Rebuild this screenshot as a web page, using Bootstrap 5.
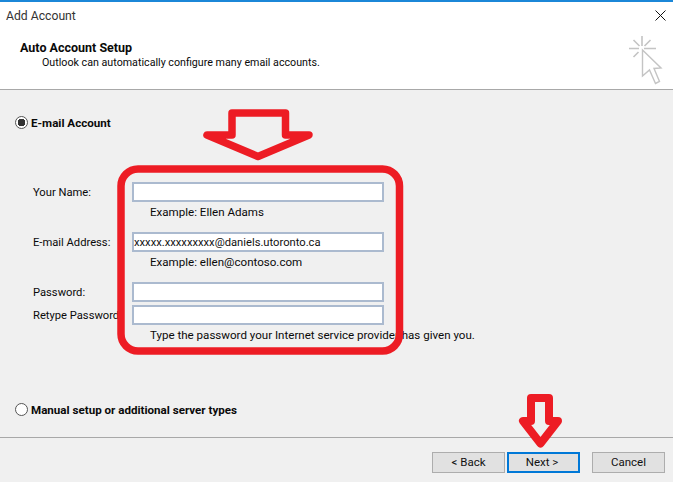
<!doctype html>
<html lang="en">
<head>
<meta charset="utf-8">
<title>Add Account</title>
<link rel="stylesheet" href="https://cdn.jsdelivr.net/npm/bootstrap@5.3.0/dist/css/bootstrap.min.css">
<style>
html,body{margin:0;height:482px;overflow:hidden}
body{font-family:"Roboto",sans-serif;font-size:11.2px;line-height:15px;color:#0a0a0a;background:#f0f0f0}
.dlg{position:relative;width:673px;height:482px;border-top:2px solid #1b87d8}
.head-pane{height:88px;background:#fff;border-bottom:1px solid #a8a8a8;position:relative}
.win-title{padding:6px 0 0 6px;font-size:12.2px;line-height:16px;color:#333}
.setup-title{padding:16px 0 0 20px;font-weight:700;font-size:12.5px;line-height:15px}
.setup-sub{padding:0 0 0 42px;font-size:10.7px;line-height:15px}
.close-x{position:absolute;left:655px;top:8px}
.cursor-art{position:absolute;left:625px;top:32px}
.main-pane{height:347px;padding:25px 0 0 15px;position:relative}
.radio-line{display:flex;align-items:flex-start;gap:3px;margin:0;padding:0;min-height:0;font-weight:700;font-size:11.6px;line-height:15px}
.radio-line label{padding-top:1px}
.radio-line .form-check-input{float:none;width:13px;height:13px;margin:1px 0 0;background-color:#fff;border:1px solid #555;flex:none}
.radio-line .form-check-input:checked{background-color:#fff;border-color:#555;background-image:radial-gradient(circle,#333 0 3.6px,transparent 4px)}
.fields{margin:51px 0 0 18px;width:351px;display:grid;grid-template-columns:99px 252px;align-items:center}
.fields label{margin:0;white-space:nowrap;line-height:15px}
.fields .form-control{height:20px;padding:0;border:2px solid #abbacf;border-radius:0;background:#fff;font:inherit;color:#111;box-shadow:none;min-height:0}
.hint{grid-column:2;padding-left:18px;white-space:nowrap;font-size:11.57px;line-height:15px}
.hint-a{height:30px;padding-top:3px}.hint-b{height:30px;padding-top:3px}.hint-c{height:20px;padding-top:3px}
.gap-row{height:3px;grid-column:1/3}
.manual-row{position:absolute;left:15px;top:312px}
.foot-pane{height:45px;border-top:1px solid #a8a8a8;padding:14px 8px 0 0;display:flex;justify-content:flex-end}
.foot-pane .btn{width:73px;height:21px;padding:0;border-radius:0;background:#e1e1e1;border:1px solid #adadad;color:#111;font-size:11.5px;line-height:17px;box-shadow:none}
.foot-pane .btn.primary-act{border:2px solid #0078d7;margin:0 12px 0 2px;padding-right:3px;line-height:15px}
.ink{position:absolute;left:0;top:-2px;pointer-events:none}
</style>
</head>
<body>
<div class="dlg">
  <div class="head-pane">
    <div class="win-title">Add Account</div>
    <svg class="close-x" width="11" height="11" viewBox="0 0 11 11"><path d="M.5.5l10 10M10.5.5l-10 10" stroke="#111" stroke-width="1" fill="none"/></svg>
    <div class="setup-title">Auto Account Setup</div>
    <div class="setup-sub">Outlook can automatically configure many email accounts.</div>
    <svg class="cursor-art" width="40" height="54" viewBox="625 34 40 54" fill="none" stroke="#c4c4c4" stroke-width="1.6">
      <path d="M642 36v10M629 48.500h10M644 48.500h12M633.500 40l6 6M650.500 40l-6 6M633.500 57l5-5"/>
      <path d="M642.500 50l18.500 18-7 .5 5.500 13-4 2-6-13.500-7 6z" stroke-width="1.400"/>
    </svg>
  </div>
  <div class="main-pane">
    <div class="form-check radio-line"><input class="form-check-input" type="radio" name="acct" id="r1" checked><label for="r1">E-mail Account</label></div>
    <div class="fields">
      <label for="f1">Your Name:</label><input id="f1" class="form-control" type="text">
      <div class="hint hint-a">Example: Ellen Adams</div>
      <label for="f2">E-mail Address:</label><input id="f2" class="form-control" type="text" value="xxxxx.xxxxxxxxx@daniels.utoronto.ca">
      <div class="hint hint-b">Example: ellen@contoso.com</div>
      <label for="f3">Password:</label><input id="f3" class="form-control" type="password">
      <div class="gap-row"></div>
      <label for="f4">Retype Password:</label><input id="f4" class="form-control" type="password">
      <div class="hint hint-c">Type the password your Internet service provider has given you.</div>
    </div>
    <div class="form-check radio-line manual-row"><input class="form-check-input" type="radio" name="acct" id="r2"><label for="r2">Manual setup or additional server types</label></div>
  </div>
  <div class="foot-pane">
    <button class="btn" type="button">&lt; Back</button>
    <button class="btn primary-act" type="button">Next &gt;</button>
    <button class="btn" type="button">Cancel</button>
  </div>
  <svg class="ink" width="673" height="482" viewBox="0 0 673 482" fill="none" stroke="#ed1c24" stroke-linejoin="round">
    <rect x="121" y="169" width="278.500" height="182" rx="17" stroke-width="7.500"/>
    <path d="M232 113H285.500V135H309L258 156.500 207 135H232Z" stroke-width="7.500"/>
    <path d="M531 398H549V421H558L540.500 443.500 523 421H531Z" stroke-width="8"/>
  </svg>
</div>
</body>
</html>
